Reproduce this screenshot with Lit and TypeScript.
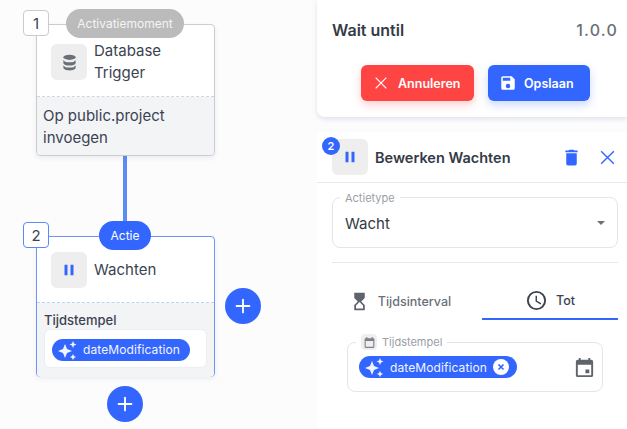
import { LitElement, html, css, svg } from "lit";
import { customElement } from "lit/decorators.js";

const sparkle = svg`<path d="M8 4l2 5 5 2-5 2-2 5-2-5-5-2 5-2z"/><path d="M16 1l1 2.500 2.500 1-2.500 1-1 2.500-1-2.500-2.500-1 2.500-1z"/><path d="M16 14l1 2 2 1-2 1-1 2-1-2-2-1 2-1z"/>`;
const db = svg`<ellipse cx="12" cy="6" rx="7" ry="3"/><path d="M5 9c1 2 3.500 2.800 7 2.800S18 11 19 9v3.500c0 1.700-3 3-7 3s-7-1.300-7-3z"/><path d="M5 15c1 2 3.500 2.800 7 2.800S18 17 19 15v3c0 1.700-3 3-7 3s-7-1.300-7-3z"/>`;
const plus = svg`<path d="M12 5v14M5 12h14" fill="none" stroke="#fff" stroke-width="2" stroke-linecap="round"/>`;
const cross = svg`<path d="M4 4l16 16M20 4L4 20" fill="none" stroke="currentColor" stroke-width="1.800"/>`;

@customElement("app-root")
export class AppRoot extends LitElement {
  static styles = css`
    :host {
      display: flex;
      width: 627px;
      height: 429px;
      overflow: hidden;
      font-family: Inter, "Noto Sans", sans-serif;
      color: #343a46;
      background: #fcfcfd;
    }
    svg {
      display: block;
      fill: currentColor;
    }

    /* canvas with the flow nodes */
    .canvas {
      position: relative;
      width: 317px;
      flex: none;
    }
    .node {
      position: absolute;
      left: 36px;
      width: 179px;
      box-sizing: border-box;
      border: 1px solid #c9ccd1;
      border-radius: 4px;
      background: #fff;
      box-shadow: 0 2px 5px rgba(60, 70, 90, 0.08);
    }
    .n1 {
      top: 24px;
      height: 132px;
    }
    .n2 {
      top: 236px;
      height: 141px;
      border-color: #6e96f8;
    }
    .head {
      display: flex;
      align-items: center;
      gap: 7px;
      padding: 0 14px;
      font-size: 15px;
      line-height: 22px;
      color: #3b4350;
    }
    .n1 .head {
      height: 72px;
      padding-top: 3px;
      box-sizing: border-box;
      border-bottom: 1px dashed #d3d5d9;
    }
    .n2 .head {
      height: 65px;
      border-bottom: 1px dashed #bcd0fb;
    }
    .tile {
      width: 36px;
      height: 36px;
      flex: none;
      display: flex;
      align-items: center;
      justify-content: center;
      border-radius: 6px;
      background: #eeeeef;
      color: #6b7078;
    }
    .blue {
      color: #3366ff;
    }
    .foot {
      height: 58px;
      box-sizing: border-box;
      border-radius: 0 0 4px 4px;
      background: #f3f4f6;
      padding: 8px 6px;
      font-size: 15px;
      line-height: 22px;
      color: #3b4350;
    }
    .n2 .foot {
      height: 74px;
      padding: 7px 7px 0;
    }
    .lbl {
      font-size: 13px;
      font-weight: 500;
      line-height: 20px;
    }
    .val {
      margin-top: -1px;
      height: 39px;
      box-sizing: border-box;
      padding: 9px 7px;
      border: 1px solid #eceef1;
      border-radius: 6px;
      background: #fff;
    }
    .num {
      position: absolute;
      left: 23px;
      width: 26px;
      height: 26px;
      box-sizing: border-box;
      display: flex;
      align-items: center;
      justify-content: center;
      border: 1px solid #c9ccd1;
      border-radius: 4px;
      background: #fff;
      font-size: 15px;
      color: #3b4350;
    }
    .num-1 {
      top: 10px;
    }
    .num-2 {
      top: 222px;
      border-color: #5d88f8;
    }
    .pill {
      position: absolute;
      height: 29px;
      display: flex;
      align-items: center;
      justify-content: center;
      border-radius: 15px;
      font-size: 12px;
    }
    .pill-trigger {
      left: 66px;
      top: 9px;
      width: 118px;
      background: #bbbbbb;
      color: #f4f4f4;
    }
    .pill-action {
      left: 99px;
      top: 221px;
      width: 52px;
      background: #3366ff;
      color: #fff;
    }
    .wire {
      position: absolute;
      left: 123px;
      top: 155px;
      width: 4px;
      height: 81px;
      background: #5b8cf6;
    }
    .add {
      position: absolute;
      width: 36px;
      height: 36px;
      display: flex;
      align-items: center;
      justify-content: center;
      border-radius: 50%;
      background: #3366ff;
    }
    .add-side {
      left: 225px;
      top: 288px;
    }
    .add-below {
      left: 107px;
      top: 386px;
    }
    .chip {
      display: inline-flex;
      align-items: center;
      gap: 6px;
      height: 22px;
      padding: 0 10px 0 5px;
      border-radius: 11px;
      background: #3366ff;
      color: #f2f5ff;
      font-size: 12px;
      letter-spacing: 0.1px;
      white-space: nowrap;
    }

    /* right side panels */
    .side {
      flex: 1;
      min-width: 0;
      display: flex;
      flex-direction: column;
      gap: 15px;
    }
    .top {
      height: 117px;
      box-sizing: border-box;
      padding: 20px 9px 0 15px;
      border-radius: 0 0 0 8px;
      background: #fff;
      box-shadow: 0 2px 5px rgba(70, 85, 120, 0.16);
    }
    .title {
      display: flex;
      justify-content: space-between;
      align-items: center;
      height: 20px;
      font-size: 16px;
      font-weight: 600;
    }
    .ver {
      font-size: 16px;
      font-weight: 500;
      letter-spacing: 1.200px;
      color: #6b7078;
    }
    .btns {
      display: flex;
      gap: 14px;
      margin: 25px 0 0 29px;
    }
    .btn {
      height: 36px;
      box-sizing: border-box;
      display: flex;
      align-items: center;
      border-radius: 6px;
      color: #fff;
      font-size: 12.500px;
      font-weight: 600;
    }
    .red {
      width: 113px;
      padding-left: 12px;
      gap: 9px;
      background: #ff4444;
      box-shadow: 0 4px 9px rgba(255, 68, 68, 0.25);
    }
    .save {
      width: 102px;
      padding-left: 11px;
      gap: 7px;
      background: #3366ff;
      box-shadow: 0 4px 9px rgba(51, 102, 255, 0.25);
    }
    .edit {
      flex: 1;
      background: #fff;
    }
    .edit-head {
      position: relative;
      height: 51px;
      box-sizing: border-box;
      display: flex;
      align-items: center;
      padding: 0 10px 0 15px;
      gap: 7px;
      border-bottom: 1px solid #e6e8ec;
      font-size: 14.500px;
      font-weight: 600;
    }
    .edit-head .grow {
      flex: 1;
    }
    .trash {
      margin-right: 9px;
    }
    .dot {
      position: absolute;
      left: 5px;
      top: 5px;
      width: 18px;
      height: 18px;
      display: flex;
      align-items: center;
      justify-content: center;
      border-radius: 50%;
      background: #3366ff;
      color: #fff;
      font-size: 11px;
      font-weight: 600;
    }
    .body {
      padding: 14px 9px 0 15px;
    }
    .field {
      position: relative;
      box-sizing: border-box;
      border: 1px solid #e3e5e9;
      border-radius: 8px;
    }
    .legend {
      position: absolute;
      top: -7px;
      padding: 0 5px;
      display: flex;
      align-items: center;
      gap: 5px;
      background: #fff;
      color: #9a9ea6;
      font-size: 11px;
      line-height: 14px;
    }
    .type {
      height: 51px;
      display: flex;
      align-items: center;
      justify-content: space-between;
      padding: 2px 12px 0;
      font-size: 15px;
    }
    .type .legend {
      left: 7px;
    }
    .caret {
      width: 0;
      height: 0;
      margin-top: -2px;
      border: 4px solid transparent;
      border-top: 4px solid #6b7078;
      border-bottom: 0;
    }
    .sep {
      height: 1px;
      margin-top: 14px;
      background: #e6e8ec;
    }
    .tabs {
      display: grid;
      grid-template-columns: 150px 136px;
      margin-top: 14px;
    }
    .tab {
      height: 43px;
      box-sizing: border-box;
      display: flex;
      align-items: center;
      justify-content: center;
      gap: 8px;
      padding: 6px 14px 0 0;
      font-size: 12.500px;
      font-weight: 500;
      color: #6b7078;
    }
    .tab .dark {
      color: #5f646c;
    }
    .tab.on {
      border-bottom: 2px solid #3366ff;
      color: #3b4350;
      padding-right: 0;
    }
    .stamp {
      height: 50px;
      margin: 22px 15px 0;
      display: flex;
      align-items: center;
      justify-content: space-between;
      padding: 0 6px 0 11px;
    }
    .stamp .legend {
      left: 8px;
      top: -9px;
    }
    .stamp .cal {
      color: #5f646c;
    }
    .legend .ic {
      width: 16px;
      height: 16px;
      display: flex;
      align-items: center;
      justify-content: center;
      border-radius: 4px;
      background: #eeeeef;
      color: #7b7f86;
    }
    .chip .x {
      width: 16px;
      height: 16px;
      margin: 0 -2px 0 0;
      display: flex;
      align-items: center;
      justify-content: center;
      border-radius: 50%;
      background: #fff;
      color: #3366ff;
    }
  `;

  private chip(removable: boolean) {
    return html`<span class="chip">
      <svg width="20" height="20" viewBox="0 0 20 20">${sparkle}</svg>
      dateModification
      ${removable
        ? html`<span class="x"><svg width="10" height="10" viewBox="0 0 24 24"><path d="M6 6l12 12M18 6L6 18" fill="none" stroke="currentColor" stroke-width="4"/></svg></span>`
        : ""}
    </span>`;
  }

  private pause(size: number) {
    return html`<svg class="blue" width=${size} height=${size} viewBox="0 0 24 24"><path d="M6 5h4v14H6zM14 5h4v14h-4z"/></svg>`;
  }

  render() {
    return html`
      <div class="canvas">
        <div class="wire"></div>
        <div class="node n1">
          <div class="head">
            <div class="tile"><svg width="21" height="21" viewBox="0 0 24 24">${db}</svg></div>
            <div>Database<br />Trigger</div>
          </div>
          <div class="foot">Op public.project invoegen</div>
        </div>
        <div class="node n2">
          <div class="head">
            <div class="tile">${this.pause(18)}</div>
            <div>Wachten</div>
          </div>
          <div class="foot">
            <div class="lbl">Tijdstempel</div>
            <div class="val">${this.chip(false)}</div>
          </div>
        </div>
        <div class="num num-1">1</div>
        <div class="num num-2">2</div>
        <div class="pill pill-trigger">Activatiemoment</div>
        <div class="pill pill-action">Actie</div>
        <div class="add add-side"><svg width="22" height="22" viewBox="0 0 24 24">${plus}</svg></div>
        <div class="add add-below"><svg width="22" height="22" viewBox="0 0 24 24">${plus}</svg></div>
      </div>
      <div class="side">
        <div class="top">
          <div class="title"><span>Wait until</span><span class="ver">1.0.0</span></div>
          <div class="btns">
            <div class="btn red"><svg width="16" height="16" viewBox="0 0 24 24">${cross}</svg>Annuleren</div>
            <div class="btn save">
              <svg width="18" height="18" viewBox="0 0 24 24"><path d="M17 3H5a2 2 0 0 0-2 2v14a2 2 0 0 0 2 2h14a2 2 0 0 0 2-2V7zm-5 16a3 3 0 1 1 0-6 3 3 0 0 1 0 6zm3-10H5V5h10z"/></svg>
              Opslaan
            </div>
          </div>
        </div>
        <div class="edit">
          <div class="edit-head">
            <div class="tile">${this.pause(18)}</div>
            <div class="dot">2</div>
            <span class="grow">Bewerken Wachten</span>
            <svg class="blue trash" width="21" height="21" viewBox="0 0 24 24"><path d="M6 19a2 2 0 0 0 2 2h8a2 2 0 0 0 2-2V7H6zM19 4h-3.500l-1-1h-5l-1 1H5v2h14z"/></svg>
            <svg class="blue" width="19" height="19" viewBox="0 0 24 24">${cross}</svg>
          </div>
          <div class="body">
            <div class="field type">
              <span class="legend">Actietype</span>
              <span>Wacht</span>
              <span class="caret"></span>
            </div>
            <div class="sep"></div>
            <div class="tabs">
              <div class="tab">
                <svg class="dark" width="21" height="21" viewBox="0 0 24 24"><path d="M6 2h12v6l-4 4 4 4v6H6v-6l4-4-4-4zm2 14.500V20h8v-3.500l-4-4z"/></svg>
                Tijdsinterval
              </div>
              <div class="tab on">
                <svg width="23" height="23" viewBox="0 0 24 24"><path d="M12 2a10 10 0 1 0 0 20 10 10 0 0 0 0-20zm0 18a8 8 0 1 1 0-16 8 8 0 0 1 0 16zm.500-13H11v6l5.200 3.200.800-1.300-4.500-2.700z"/></svg>
                Tot
              </div>
            </div>
            <div class="field stamp">
              <span class="legend">
                <span class="ic"><svg width="13" height="13" viewBox="0 0 24 24"><path d="M19 4h-1V2h-2v2H8V2H6v2H5a2 2 0 0 0-2 2v14a2 2 0 0 0 2 2h14a2 2 0 0 0 2-2V6a2 2 0 0 0-2-2zm0 16H5V9h14z"/></svg></span>
                Tijdstempel
              </span>
              ${this.chip(true)}
              <svg class="cal" width="23" height="23" viewBox="0 0 24 24"><path d="M19 4h-1V2h-2v2H8V2H6v2H5a2 2 0 0 0-2 2v14a2 2 0 0 0 2 2h14a2 2 0 0 0 2-2V6a2 2 0 0 0-2-2zm0 16H5V9h14zm-2-6h-4v4h4z"/></svg>
            </div>
          </div>
        </div>
      </div>
    `;
  }
}
